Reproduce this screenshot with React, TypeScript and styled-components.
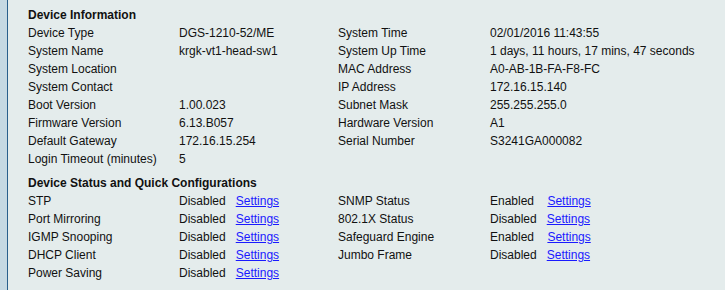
import React from "react";
import styled, { createGlobalStyle } from "styled-components";

const Global = createGlobalStyle`
  html, body { margin: 0; padding: 0; background: #e4ecec; }
  body { font-family: Arial, "Liberation Sans", sans-serif; font-size: 12px; color: #111; }
`;

const Page = styled.div`
  display: flex;
  min-height: 290px;
  background: #e4ecec;
`;

const SideStrip = styled.div`
  width: 7px;
  flex: none;
  background: #c6d9e3;
  border-right: 1px solid #2a5f8c;
`;

const Content = styled.div`
  flex: 1;
  padding: 6px 0 0 20px;
  display: flex;
  flex-direction: column;
  gap: 6px;
`;

const Section = styled.div`
  display: grid;
  grid-template-columns: 151px 159px 152px auto;
  grid-auto-rows: 18px;
  line-height: 18px;
  white-space: nowrap;
`;

const Heading = styled.div`
  grid-column: 1 / -1;
  font-weight: bold;
`;

const Cell = styled.div``;

const Link = styled.a`
  color: #1a1aff;
  text-decoration: underline;
  cursor: pointer;
`;

const info: [string, string, string, string][] = [
  ["Device Type", "DGS-1210-52/ME", "System Time", "02/01/2016 11:43:55"],
  ["System Name", "krgk-vt1-head-sw1", "System Up Time", "1 days, 11 hours, 17 mins, 47 seconds"],
  ["System Location", "", "MAC Address", "A0-AB-1B-FA-F8-FC"],
  ["System Contact", "", "IP Address", "172.16.15.140"],
  ["Boot Version", "1.00.023", "Subnet Mask", "255.255.255.0"],
  ["Firmware Version", "6.13.B057", "Hardware Version", "A1"],
  ["Default Gateway", "172.16.15.254", "Serial Number", "S3241GA000082"],
  ["Login Timeout (minutes)", "5", "", ""],
];

const status: [string, string, string?, string?][] = [
  ["STP", "Disabled", "SNMP Status", "Enabled"],
  ["Port Mirroring", "Disabled", "802.1X Status", "Disabled"],
  ["IGMP Snooping", "Disabled", "Safeguard Engine", "Enabled"],
  ["DHCP Client", "Disabled", "Jumbo Frame", "Disabled"],
  ["Power Saving", "Disabled"],
];

const StatusCell = ({ value }: { value?: string }) => {
  if (!value) return <Cell />;
  const pad = value === "Enabled" ? "\u00a0\u00a0\u00a0\u00a0" : "\u00a0\u00a0\u00a0";
  return (
    <Cell>
      {value}
      {pad}
      <Link>Settings</Link>
    </Cell>
  );
};

export default function App() {
  return (
    <>
      <Global />
      <Page>
        <SideStrip />
        <Content>
          <Section>
            <Heading>Device Information</Heading>
            {info.map((r) => (
              <React.Fragment key={r[0]}>
                <Cell>{r[0]}</Cell>
                <Cell>{r[1]}</Cell>
                <Cell>{r[2]}</Cell>
                <Cell>{r[3]}</Cell>
              </React.Fragment>
            ))}
          </Section>
          <Section>
            <Heading>Device Status and Quick Configurations</Heading>
            {status.map((r) => (
              <React.Fragment key={r[0]}>
                <Cell>{r[0]}</Cell>
                <StatusCell value={r[1]} />
                <Cell>{r[2] ?? ""}</Cell>
                <StatusCell value={r[3]} />
              </React.Fragment>
            ))}
          </Section>
        </Content>
      </Page>
    </>
  );
}
